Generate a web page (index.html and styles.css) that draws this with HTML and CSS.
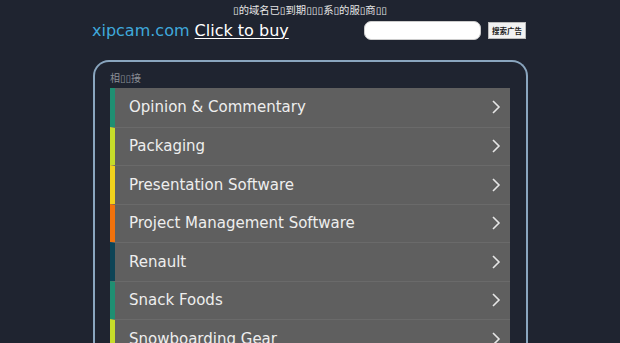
FILE: index.html
```html
<!DOCTYPE html>
<html>
<head>
<meta charset="utf-8">
<link rel="stylesheet" href="styles.css">
</head>
<body>
<div class="notice">▯的域名已▯到期▯▯▯系▯的服▯商▯▯</div>
<div class="topbar">
  <div class="brand"><span class="domain">xipcam.com</span> <a class="buy" href="#">Click to buy</a></div>
  <form class="search">
    <input class="search-input" type="text">
    <button class="search-btn" type="button">搜索广告</button>
  </form>
</div>
<div class="panel">
  <div class="panel-label">相▯▯接</div>
  <ul class="links">
    <li class="row c1"><span class="txt">Opinion &amp; Commentary</span><svg class="chev" viewBox="0 0 10 14"><polyline points="2,1 8,7 2,13"/></svg></li>
    <li class="row c2"><span class="txt">Packaging</span><svg class="chev" viewBox="0 0 10 14"><polyline points="2,1 8,7 2,13"/></svg></li>
    <li class="row c3"><span class="txt">Presentation Software</span><svg class="chev" viewBox="0 0 10 14"><polyline points="2,1 8,7 2,13"/></svg></li>
    <li class="row c4"><span class="txt">Project Management Software</span><svg class="chev" viewBox="0 0 10 14"><polyline points="2,1 8,7 2,13"/></svg></li>
    <li class="row c5"><span class="txt">Renault</span><svg class="chev" viewBox="0 0 10 14"><polyline points="2,1 8,7 2,13"/></svg></li>
    <li class="row c1"><span class="txt">Snack Foods</span><svg class="chev" viewBox="0 0 10 14"><polyline points="2,1 8,7 2,13"/></svg></li>
    <li class="row c2"><span class="txt">Snowboarding Gear</span><svg class="chev" viewBox="0 0 10 14"><polyline points="2,1 8,7 2,13"/></svg></li>
  </ul>
</div>
</body>
</html>
```
FILE: styles.css
```css
html, body {
  margin: 0;
  padding: 0;
  background: #1f2430;
  height: 343px;
  overflow: hidden;
  font-family: "DejaVu Sans", "Noto Sans CJK SC", sans-serif;
}
.notice {
  text-align: center;
  color: #e6e6e6;
  font-size: 10.3px;
  line-height: 12px;
  padding-top: 4px;
  height: 16px;
  box-sizing: border-box;
}
.topbar {
  display: flex;
  align-items: center;
  justify-content: space-between;
  width: 436px;
  margin: 0 0 0 92px;
  height: 28px;
}
.brand {
  font-size: 16px;
  color: #fff;
  white-space: nowrap;
}
.domain { color: #3fa9dc; }
.buy { color: #fff; text-decoration: underline; text-decoration-thickness: 1px; text-underline-offset: 2px; }
.search {
  display: flex;
  align-items: center;
  gap: 7px;
  margin: 0;
  padding-right: 2px;
}
.search-input {
  width: 115px;
  height: 17px;
  border: 1px solid #ccc;
  border-radius: 7px;
  background: #fff;
  padding: 0;
  margin: 0;
}
.search-btn {
  height: 17px;
  width: 38px;
  padding: 0;
  margin: 0;
  border: 1px solid #bbb;
  background: #f2f2f2;
  font-size: 7.5px;
  font-weight: bold;
  color: #222;
  font-family: "Noto Sans CJK SC", sans-serif;
  line-height: 15px;
  text-align: center;
}
.panel {
  margin: 16px 0 0 93px;
  width: 435px;
  height: 400px;
  border: 2px solid #8aa6bf;
  border-bottom: none;
  border-radius: 16px 16px 0 0;
  padding: 0 16px 0 15px;
  box-sizing: border-box;
}
.panel-label {
  color: #8b8f96;
  font-size: 10px;
  line-height: 12px;
  padding-top: 11px;
  height: 26px;
  box-sizing: border-box;
}
.links {
  list-style: none;
  margin: 0;
  padding: 0;
  background: #5f5f5f;
}
.row {
  display: flex;
  align-items: center;
  justify-content: space-between;
  height: 38.5px;
  box-sizing: border-box;
  border-left: 5px solid #249278;
  padding: 0 9px 0 14px;
  color: #eeeeee;
  font-size: 15px;
}
.row + .row { border-top: 1px solid #6a6a6a; }
.c1 { border-left-color: #1f8f72; }
.c2 { border-left-color: #c6dc2a; }
.c3 { border-left-color: #f2d21c; }
.c4 { border-left-color: #f2720c; }
.c5 { border-left-color: #0e4456; }
.chev {
  width: 10px;
  height: 14px;
  fill: none;
  stroke: #e6e6e6;
  stroke-width: 1.6;
}
```
